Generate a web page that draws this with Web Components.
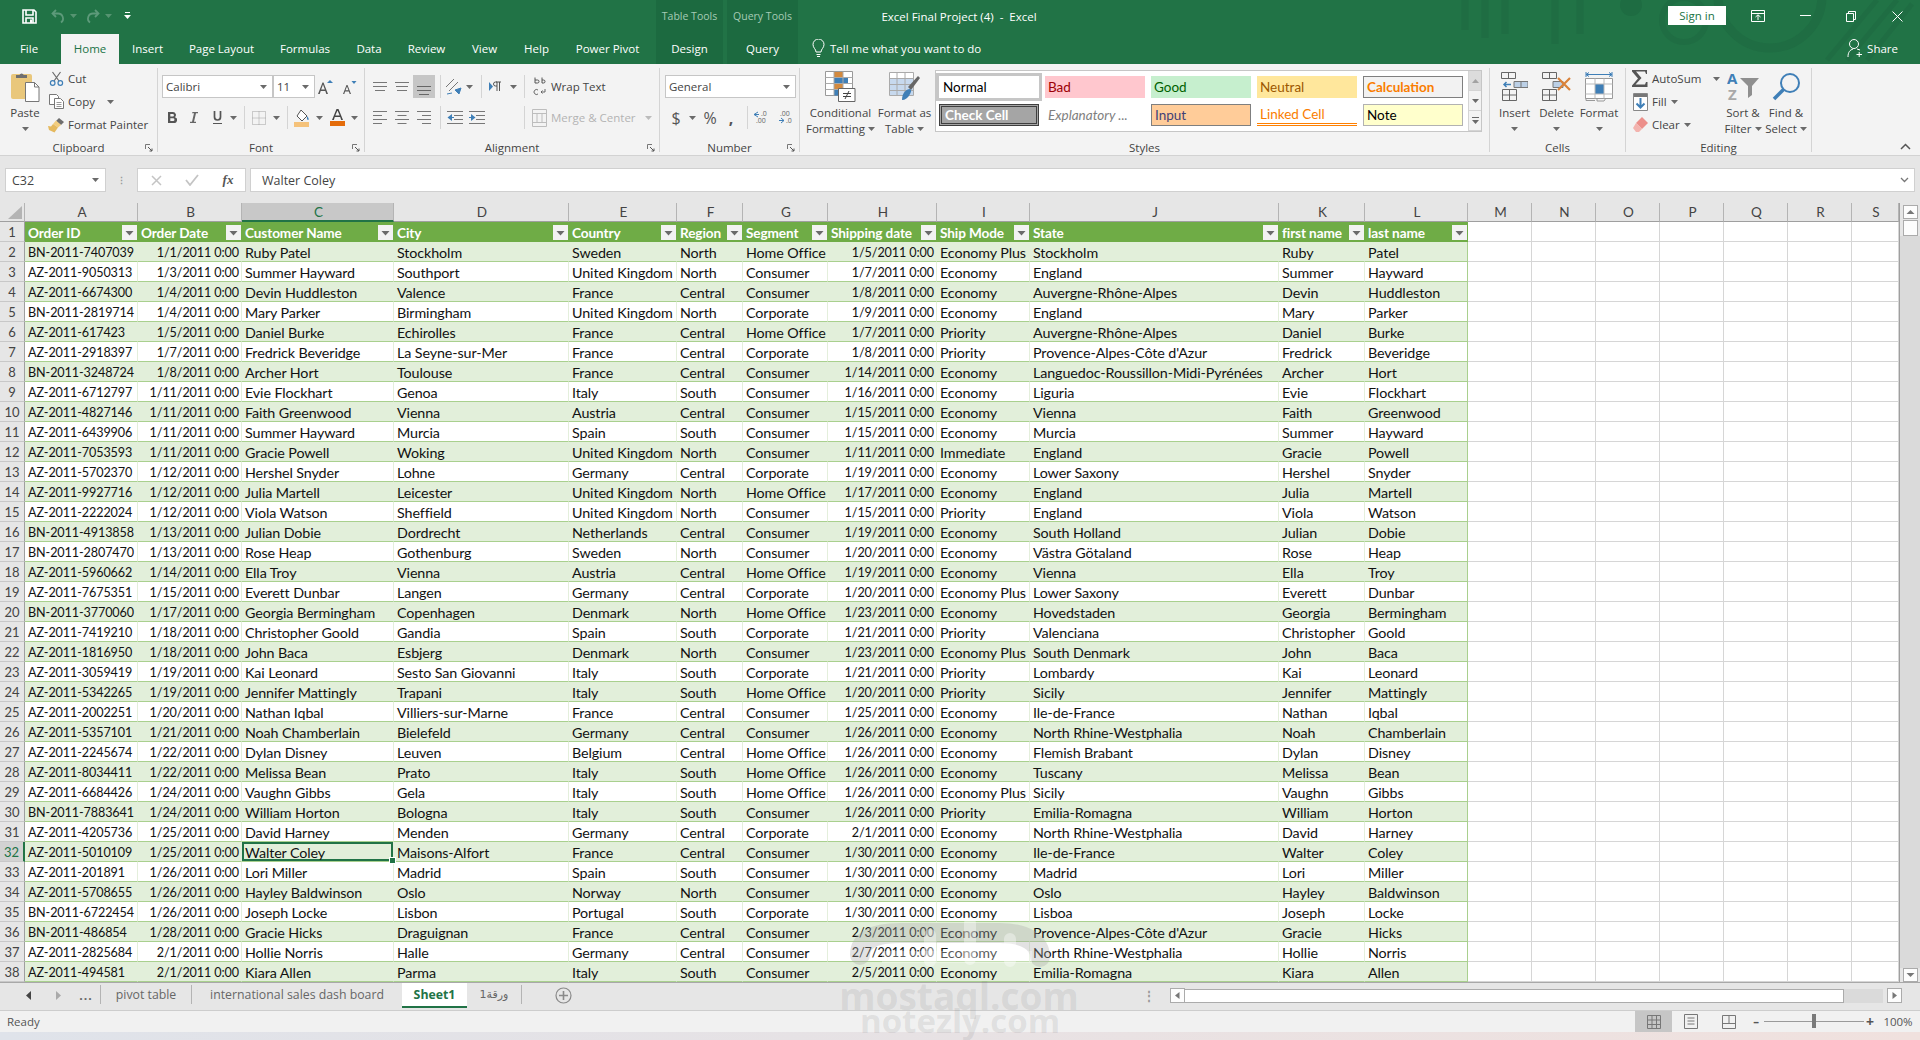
<!DOCTYPE html>
<html>
<head>
<meta charset="utf-8">
<title>Excel Final Project (4) - Excel</title>
<style>
  html, body { margin: 0; padding: 0; background: #e6e6e6; }
  body { font-family: "Open Sans", "Liberation Sans", sans-serif; overflow: hidden; }
</style>
</head>
<body>
<xl-app></xl-app>
<script>
const ICONS = {
  caret: '<svg width="7" height="4"><path d="M0 0h7L3.5 4z" fill="#6a6a6a"/></svg>',
  caretw: '<svg width="7" height="4"><path d="M0 0h7L3.5 4z" fill="#d0e0d6"/></svg>',
  save: '<svg width="15" height="15" fill="none" stroke="#fff" stroke-width="1.6"><path d="M1 1h11l2 2v11H1z"/><path d="M4 1v5h7V1M4 14V9h7v5"/><path d="M8 10.5h2v3.5H8z" fill="#fff" stroke="none"/></svg>',
  undo: '<svg width="14" height="15" fill="none" stroke="#5d9a7a" stroke-width="1.8"><path d="M5 1L1.5 4.5 5 8"/><path d="M2 4.5h5a5 5 0 0 1 3 9"/></svg>',
  redo: '<svg width="14" height="15" fill="none" stroke="#5d9a7a" stroke-width="1.8"><path d="M9 1l3.5 3.5L9 8"/><path d="M12 4.5H7a5 5 0 0 0-3 9"/></svg>',
  qat: '<svg width="7" height="8" fill="#fff"><path d="M1 0h5v1H1zM0 3h7L3.5 7z"/></svg>',
  bulb: '<svg width="13" height="19" fill="none" stroke="#fff"><path d="M4 13c0-3-3-4-3-7.500a5.500 5.500 0 0 1 11 0C12 9 9 10 9 13z"/><path d="M4.500 15.500h4M5 17.500h3"/></svg>',
  share: '<svg width="15" height="20" fill="none" stroke="#fff"><circle cx="7" cy="6" r="4.500"/><path d="M1 19c0-5 2-7 5-8M10 11l3 1M9.500 16.500h5.500M12.200 14v5"/></svg>',
  ribbonopt: '<svg width="14" height="12" fill="none" stroke="#fff"><path d="M.5.500h13v11H.5zM.5 3.500h13"/><path d="M7 10V5M4.500 7L7 4.800 9.500 7"/></svg>',
  min: '<svg width="11" height="2"><path d="M0 .5h11" stroke="#fff"/></svg>',
  restore: '<svg width="10" height="11" fill="none" stroke="#fff"><path d="M.5 2.500h7v8h-7zM2.500 2.500v-2h7v8h-2"/></svg>',
  close: '<svg width="11" height="11" stroke="#fff" fill="none"><path d="M.5.500l10 10M10.500.500l-10 10"/></svg>',
  paste: '<svg width="30" height="31"><rect x="1" y="3" width="21" height="25" rx="2" fill="#e9c77b"/><path d="M6 7V4h3.500a2.200 2.200 0 0 1 4.200 0H17v3z" fill="#6f6f6f"/><path d="M15.500 11.500h9l4.500 4.500v14.500H15.500z" fill="#fff" stroke="#777"/><path d="M24.500 11.500V16H29" fill="none" stroke="#777"/></svg>',
  cut: '<svg width="15" height="15" fill="none"><path d="M3.500 1l6.500 9M11.500 1L5 10" stroke="#6a6a6a" stroke-width="1.200"/><circle cx="3.700" cy="12" r="2.300" stroke="#3f7fb7" stroke-width="1.200"/><circle cx="11.300" cy="12" r="2.300" stroke="#3f7fb7" stroke-width="1.200"/></svg>',
  copy: '<svg width="15" height="15" fill="#fff" stroke="#777"><path d="M.5.500h7l2 2v8h-9z"/><path d="M5.500 4.500h6l3 3v7h-9z"/><path d="M7.500 8.500h5M7.500 10.500h5M7.500 12.500h5" stroke="#999"/></svg>',
  painter: '<svg width="17" height="16"><path d="M11 1l5 4-3 3-5-4z" fill="#6e6e6e"/><path d="M8 3.500l5 4.500-3 2.500-5-3.500z" fill="#f2cd7e"/><path d="M5 7l5 3.500-3.500 5L1 13l-1-4 3 .5z" fill="#e5b95e"/></svg>',
  bold: '<svg width="9" height="11"><path d="M0 0h5a3 3 0 0 1 2 5.200A3 3 0 0 1 5.500 11H0zM2.300 2v2.500h2.400a1.250 1.250 0 0 0 0-2.500zM2.300 6.300V9h2.800a1.350 1.350 0 0 0 0-2.700z" fill="#555" fill-rule="evenodd"/></svg>',
  italic: '<svg width="8" height="11"><path d="M2.500 0H8v1.300H6L4 9.700h2V11H0V9.700h2L4 1.300H2z" fill="#666"/></svg>',
  under: '<svg width="9" height="13" fill="none" stroke="#555"><path d="M1.500 0v6a3 3 0 0 0 6 0V0" stroke-width="1.700"/><path d="M0 12.500h9"/></svg>',
  grow: '<svg width="16" height="16"><path d="M1 15L5.500 3.500h1L11 15H9.300l-1-3H3.700l-1 3zM4.200 10.500h3.600L6 5.500z" fill="#555"/><path d="M10 4l3-3 3 3z" fill="#3f7fb7"/></svg>',
  shrink: '<svg width="15" height="14"><path d="M1 14L4.500 5h1L9 14H7.700l-.8-2.500H3.100L2.300 14zM3.500 10.300h3L5 6.500z" fill="#555"/><path d="M9.500 1h5L12 4z" fill="#3f7fb7"/></svg>',
  border: '<svg width="14" height="14" fill="none" stroke="#a0a0a0" stroke-dasharray="1 1"><path d="M.5.500h13v13H.5zM7 .5v13M.5 7h13"/></svg>',
  fill: '<svg width="17" height="18"><path d="M7 1l6 6-5 5-5-5 2-3z" fill="#fff" stroke="#555"/><path d="M13 7c1.500 2 2 3 1.500 3.800-.8.700-2-.3-1.500-3.800z" fill="#3f7fb7"/><rect y="13" width="15" height="5" fill="#f5c27a"/></svg>',
  color: '<svg width="15" height="17"><path d="M2 11L6.500 0h2L13 11h-1.800l-1-3H4.800l-1 3zM5.300 6.500h4.400L7.500 1.500z" fill="#444"/><rect y="12" width="15" height="5" fill="#e46c0a"/></svg>',
  atop: '<svg width="14" height="9" stroke="#777"><path d="M0 .5h14M0 4.500h14M2 8.500h10"/></svg>',
  amid: '<svg width="14" height="9" stroke="#777"><path d="M0 .5h14M1 4.500h12M2 8.500h10"/></svg>',
  abot: '<svg width="14" height="9" stroke="#666"><path d="M0 .5h14M0 4.500h14M2 8.500h10"/></svg>',
  orient: '<svg width="17" height="17"><path d="M1 9l8-8M4 13l9-9" stroke="#777" fill="none"/><path d="M10 12l6-2-2 6zM2 16l5-1" stroke="#3f7fb7" fill="#3f7fb7"/></svg>',
  rtl: '<svg width="12" height="11"><path d="M0 1l4 4.500L0 10z" fill="#3f7fb7"/><path d="M7 1h5M8 1v9M10.500 1v9M8 5H6.500a2 2 0 0 1 0-4H8" stroke="#555" fill="none"/></svg>',
  wrap: '<svg width="13" height="21" fill="none"><path d="M2 7V1.500M2 4h2.500a1.500 1.500 0 0 1 0 3H2M9 1.500V7M9 4h1.500a1.500 1.500 0 0 1 0 3H9" stroke="#555"/><path d="M5 14a2.500 2.500 0 1 0 0 4M12 13v3H8M9.500 14.500L8 16l1.500 1.500" stroke="#666"/></svg>',
  aleft: '<svg width="14" height="13" stroke="#777"><path d="M0 .5h14M0 4.500h9M0 8.500h14M0 12.500h9"/></svg>',
  acenter: '<svg width="14" height="13" stroke="#777"><path d="M0 .5h14M2.500 4.500h9M0 8.500h14M2.500 12.500h9"/></svg>',
  aright: '<svg width="14" height="13" stroke="#777"><path d="M0 .5h14M5 4.500h9M0 8.500h14M5 12.500h9"/></svg>',
  indl: '<svg width="16" height="13"><path d="M0 .5h16M7 4.500h9M7 8.500h9M0 12.500h16" stroke="#777"/><path d="M5 3v7L.5 6.500z" fill="#3f7fb7"/><path d="M3 6h4v1H3z" fill="#3f7fb7"/></svg>',
  indr: '<svg width="16" height="13"><path d="M0 .5h16M7 4.500h9M7 8.500h9M0 12.500h16" stroke="#777"/><path d="M2 3v7l4.500-3.500z" fill="#3f7fb7"/><path d="M0 6h4v1H0z" fill="#3f7fb7"/></svg>',
  merge: '<svg width="15" height="18" fill="none" stroke="#bdbdbd"><path d="M.5.500h14v17H.5zM.5 4.500h14M.5 13.500h14M5 4.500v9M10 4.500v9"/></svg>',
  inc: '<svg width="17" height="18" overflow="visible"><path d="M5 3L1 5.500 5 8M1 5.500h5" stroke="#3f7fb7" fill="none"/><text x="8" y="7" font-size="7" font-family="Open Sans" fill="#666">.0</text><text x="3" y="14" font-size="7" font-family="Open Sans" fill="#666">.00</text></svg>',
  dec: '<svg width="17" height="18" overflow="visible"><path d="M2 11.500h5M4 9l3 2.500L4 14" stroke="#3f7fb7" fill="none"/><text x="3" y="7" font-size="7" font-family="Open Sans" fill="#666">.00</text><text x="9" y="14" font-size="7" font-family="Open Sans" fill="#666">.0</text></svg>',
  condfmt: '<svg width="31" height="31" fill="none"><path d="M.5.500h27v24H.5z" fill="#fff" stroke="#999"/><rect x="9" y="1" width="9" height="5.500" fill="#d38a3f"/><rect x="9" y="7" width="14" height="6" fill="#3f7fb7"/><rect x="9" y="13" width="9" height="6" fill="#d38a3f"/><rect x="9" y="19" width="5" height="5.500" fill="#3f7fb7"/><path d="M9 .5v24M18 .5v24M.5 6.500h27M.5 12.500h27M.5 18.500h27" stroke="#aaa"/><path d="M13.500 17.500h16.500v13H13.500z" fill="#fff" stroke="#666"/><path d="M18 22.500h8M18 25.500h8M24 20l-4 8" stroke="#444"/></svg>',
  fmttable: '<svg width="31" height="29" fill="none"><path d="M.5.500h24v23H.5z" fill="#fff" stroke="#aaa"/><rect x="1" y="6" width="23" height="17" fill="#c7d9ee"/><path d="M8 .5v23M16 .5v23M.5 6.500h24M.5 12.500h24M.5 18.500h24" stroke="#aaa"/><path d="M19 15L29 4l2 2-9 12z" fill="#666"/><path d="M13 28c0-7 4-11 8-11 2 1 1 3 0 5-2 4-5 6-8 6z" fill="#3f7fb7"/></svg>',
  insert: '<svg width="27" height="29" fill="none"><path d="M.5.500h14v6H.5zM7.500.5v6M1.500 17.500h14v11h-14zM8.500 17.500v11M1.500 23h14" stroke="#666"/><path d="M13 9.500h14v6H13z" fill="#bcd0e6" stroke="#777"/><path d="M20 9.500v6" stroke="#777"/><path d="M10 12.500H3M5.500 10L3 12.500 5.500 15" stroke="#3f7fb7" stroke-width="1.500"/></svg>',
  del: '<svg width="30" height="29" fill="none"><path d="M.5.500h14v6H.5zM7.500.5v6M.5 17.500h14v11H.5zM7.500 17.500v11M.5 23h14" stroke="#666"/><path d="M11 9.500h10v6H11z" fill="#bcd0e6" stroke="#777"/><path d="M16 6l12 12M28 6L16 18" stroke="#d9823a" stroke-width="2.200"/></svg>',
  format: '<svg width="28" height="31" fill="none"><path d="M1 3.500h26M1 1v5M27 1v5" stroke="#3f7fb7"/><path d="M4 1.500L1 3.500 4 5.500M24 1.500l3 2-3 2" stroke="#3f7fb7"/><path d="M.5 7.500h27v20H.5z" fill="#fff" stroke="#999"/><rect x="10" y="13" width="9" height="10" fill="#3f7fb7"/><path d="M10 7.500v20M19 7.500v20M.5 13h27M.5 23h27" stroke="#bbb"/><path d="M1 27v2.500h9M12 27v3h7l2-3" stroke="#999"/></svg>',
  sigma: '<svg width="16" height="17"><path d="M0 0h15v4h-1l-1-2.500H4L9.500 8 3.500 14.500H13l1-2.500h1.500v5H0v-1.500L6 8.500 0 1.500z" fill="#555"/></svg>',
  fillb: '<svg width="15" height="18"><path d="M.5.500h14v17H.5z" fill="#fff" stroke="#888"/><rect x="1" y="1" width="13" height="3" fill="#777"/><path d="M7.500 5v10M3.500 10.500l4 4 4-4" fill="none" stroke="#3f7fb7" stroke-width="2"/></svg>',
  eraser: '<svg width="15" height="15"><path d="M9 0l6 6-6 6L3 6z" fill="#ec8f8a"/><path d="M3 6l6 6-3 3H3L0 11z" fill="#f3b3ae"/></svg>',
  sort: '<svg width="33" height="29"><text x="0" y="12" font-family="Open Sans" font-weight="700" font-size="15" fill="#3f7fb7">A</text><text x="1" y="28" font-family="Open Sans" font-weight="700" font-size="15" fill="#a8a8a8">Z</text><path d="M13 6h19l-7 8v9l-4 3V14z" fill="#8f8f8f"/></svg>',
  find: '<svg width="29" height="29" fill="none"><circle cx="18" cy="11" r="9" stroke="#3f7fb7" stroke-width="2"/><path d="M11.500 17.500L2 27" stroke="#3f7fb7" stroke-width="3.500"/></svg>',
  launch: '<svg width="8" height="8" fill="none" stroke="#777"><path d="M.5 5V.5H5"/><path d="M3 3l4 4M4.500 7H7V4.500" stroke="#555"/></svg>',
  collapse: '<svg width="11" height="7" fill="none" stroke="#555" stroke-width="1.500"><path d="M1 6l4.500-4.500L10 6"/></svg>',
  chev: '<svg width="9" height="6" fill="none" stroke="#777" stroke-width="1.300"><path d="M1 1l3.500 3.500L8 1"/></svg>',
  x: '<svg width="11" height="11" fill="none" stroke="#c4c4c4" stroke-width="1.500"><path d="M1 1l9 9M10 1l-9 9"/></svg>',
  check: '<svg width="14" height="12" fill="none" stroke="#c4c4c4" stroke-width="1.800"><path d="M1 6l4 5 8-10"/></svg>',
  corner: '<svg width="14" height="14"><path d="M14 0v13H0z" fill="#b4b4b4"/></svg>',
  filter: '<svg width="15" height="15"><rect width="15" height="15" fill="#f2f2f2"/><path d="M3.500 6h8l-4 4.500z" fill="#6a6a6a"/></svg>',
  sup: '<svg width="15" height="14"><rect x=".5" y=".5" width="14" height="13" fill="#fdfdfd" stroke="#ababab"/><path d="M3.500 9l4-4 4 4z" fill="#777"/></svg>',
  sdn: '<svg width="15" height="14"><rect x=".5" y=".5" width="14" height="13" fill="#fdfdfd" stroke="#ababab"/><path d="M3.500 5l4 4 4-4z" fill="#777"/></svg>',
  left: '<svg width="6" height="9"><path d="M5 0v9L0 4.500z" fill="#444"/></svg>',
  right: '<svg width="6" height="9"><path d="M1 0v9l5-4.500z" fill="#aaa"/></svg>',
  plus: '<svg width="17" height="17" fill="none" stroke="#8a8a8a"><circle cx="8.500" cy="8.500" r="7.500" stroke-width="1.200"/><path d="M8.500 4v9M4 8.500h9" stroke-width="1.600"/></svg>',
  hl: '<svg width="15" height="15"><rect x=".5" y=".5" width="14" height="14" fill="#fdfdfd" stroke="#ababab"/><path d="M9.500 4v7L5 7.500z" fill="#777"/></svg>',
  hr: '<svg width="15" height="15"><rect x=".5" y=".5" width="14" height="14" fill="#fdfdfd" stroke="#ababab"/><path d="M5.500 4v7l4.500-3.500z" fill="#777"/></svg>',
  vnormal: '<svg width="14" height="14" fill="none" stroke="#777"><path d="M.5.500h13v13H.5zM5 .5v13M9.500.5v13M.5 5h13M.5 9.500h13"/></svg>',
  vlayout: '<svg width="14" height="15" fill="none" stroke="#777"><path d="M.5.500h13v14H.5zM3.500 4h7M3.500 7h7M3.500 10h7"/></svg>',
  vbreak: '<svg width="14" height="14" fill="none" stroke="#777"><path d="M.5.500h13v13H.5zM7 .5v8M.5 8.500H13"/></svg>'
};

class XlIcon extends HTMLElement {
  constructor() {
    super();
    this.attachShadow({ mode: 'open' });
  }
  connectedCallback() {
    this.shadowRoot.innerHTML = `<style>:host{display:inline-flex;flex:none;line-height:0}</style>${ICONS[this.getAttribute('name')] || ''}`;
  }
}

class XlGroup extends HTMLElement {
  constructor() {
    super();
    this.attachShadow({ mode: 'open' });
  }
  connectedCallback() {
    const launch = this.hasAttribute('launch') ? '<xl-icon class="launch" name="launch"></xl-icon>' : '';
    this.shadowRoot.innerHTML = `
      <style>
        :host { display: flex; flex-direction: column; flex: none; box-sizing: border-box; height: 84px; margin-top: 4px; border-right: 1px solid #d4d4d4; position: relative; }
        .body { display: flex; height: 72px; flex: none; }
        .label { height: 16px; line-height: 16px; flex: none; text-align: center; color: #444; font-size: 11.5px; }
        .launch { position: absolute; right: 4px; bottom: 0; }
      </style>
      <div class="body"><slot></slot></div>
      <div class="label">${this.getAttribute('label')}</div>
      ${launch}`;
    this.style.width = this.getAttribute('w') + 'px';
  }
}

class XlStyleCell extends HTMLElement {
  constructor() {
    super();
    this.attachShadow({ mode: 'open' });
    this.shadowRoot.innerHTML = `
      <style>
        :host { display: flex; align-items: center; box-sizing: border-box; height: 22px; padding-left: 3px; font: 13.500px Lato, sans-serif; white-space: nowrap; overflow: hidden; }
        :host([kind=normal]) { background: #fff; outline: 3px solid #c6c6c6; outline-offset: 0; color: #000; padding-left: 4px; }
        :host([kind=bad]) { background: #ffc7ce; color: #9c0006; }
        :host([kind=good]) { background: #c6efce; color: #006100; }
        :host([kind=neutral]) { background: #ffe79c; color: #9c5700; }
        :host([kind=calc]) { background: #f2f2f2; border: 1px solid #7f7f7f; color: #fa7d00; font-weight: 700; }
        :host([kind=check]) { background: #a5a5a5; border: 3px double #3f3f3f; color: #fff; font-weight: 700; }
        :host([kind=expl]) { color: #7f7f7f; font-style: italic; }
        :host([kind=input]) { background: #ffcc99; border: 1px solid #7f7f7f; color: #3f3f76; }
        :host([kind=linked]) { color: #fa7d00; border-bottom: 3px double #ff8001; }
        :host([kind=note]) { background: #ffffcc; border: 1px solid #b2b2b2; color: #000; }
      </style><slot></slot>`;
  }
}

class XlCombo extends HTMLElement {
  constructor() {
    super();
    this.attachShadow({ mode: 'open' });
    this.shadowRoot.innerHTML = `
      <style>
        :host { display: flex; align-items: center; justify-content: space-between; flex: none; box-sizing: border-box; height: 23px; background: #fff; border: 1px solid #c6c6c6; padding: 0 5px 0 3px; color: #444; font-size: 11.500px; }
      </style><slot></slot><xl-icon name="caret"></xl-icon>`;
  }
}

class XlTitlebar extends HTMLElement {
  constructor() {
    super();
    this.attachShadow({ mode: 'open' });
    this.shadowRoot.innerHTML = `
      <style>
        :host { display: flex; height: 34px; color: #fff; font-size: 11.500px; position: relative; }
        .c { display: flex; align-items: center; justify-content: center; flex: none; padding-bottom: 2px; box-sizing: border-box; position: relative; z-index: 1; }
        .ctx { background: #1c6a40; color: #a5cbb5; font-size: 10.500px; height: 34px; }
        .art { position: absolute; left: 1430px; top: 0; }
        .signin { width: 58px; height: 19px; margin-top: 6px; background: #fff; color: #217346; display: flex; align-items: center; justify-content: center; position: relative; z-index: 1; }
      </style>
      <svg class="art" width="490" height="64" fill="none">
        <g stroke="#1f6d43" stroke-width="7"><path d="M35 0v30M55 0v38M75 0v34M125 0v44M150 0v34"/></g>
        <circle cx="201" cy="5" r="11" fill="#1e6c42"/>
        <circle cx="254" cy="20" r="22" stroke="#1f6d43" stroke-width="6"/>
        <circle cx="340" cy="-4" r="52" stroke="#1f6d43" stroke-width="9"/>
        <g stroke="#1f6d43" stroke-width="5"><path d="M397 60l50-60M417 60l50-60M437 60l45-56"/></g>
      </svg>
      <div class="c" style="width:18px"></div>
      <div class="c" style="width:22px"><xl-icon name="save"></xl-icon></div>
      <div class="c" style="width:11px"></div>
      <div class="c" style="width:14px"><xl-icon name="undo"></xl-icon></div>
      <div class="c" style="width:16px"><xl-icon name="caretw" style="opacity:.3"></xl-icon></div>
      <div class="c" style="width:4px"></div>
      <div class="c" style="width:15px"><xl-icon name="redo"></xl-icon></div>
      <div class="c" style="width:16px"><xl-icon name="caretw" style="opacity:.3"></xl-icon></div>
      <div class="c" style="width:2px"></div>
      <div class="c" style="width:18px"><xl-icon name="qat"></xl-icon></div>
      <div class="c" style="width:520px"></div>
      <div class="c ctx" style="width:67px">Table Tools</div>
      <div class="c" style="width:4px"></div>
      <div class="c ctx" style="width:71px">Query Tools</div>
      <div class="c" style="width:84px"></div>
      <div class="c" style="width:154px;white-space:pre">Excel Final Project (4)  -  Excel</div>
      <div style="flex:1"></div>
      <div class="signin">Sign in</div>
      <div class="c" style="width:64px"><xl-icon name="ribbonopt"></xl-icon></div>
      <div class="c" style="width:30px"><xl-icon name="min"></xl-icon></div>
      <div class="c" style="width:62px"><xl-icon name="restore"></xl-icon></div>
      <div class="c" style="width:30px"><xl-icon name="close"></xl-icon></div>
      <div style="width:8px"></div>`;
  }
}

class XlTabstrip extends HTMLElement {
  constructor() {
    super();
    this.attachShadow({ mode: 'open' });
    const tabs = [['File', 58], ['Home', 58, 'on'], ['Insert', 57], ['Page Layout', 91], ['Formulas', 76], ['Data', 52], ['Review', 63], ['View', 53], ['Help', 51], ['Power Pivot', 91]];
    this.shadowRoot.innerHTML = `
      <style>
        :host { display: flex; height: 30px; color: #fff; font-size: 11.500px; position: relative; z-index: 1; }
        .t { display: flex; align-items: center; justify-content: center; flex: none; box-sizing: border-box; padding-bottom: 2px; }
        .on { background: #f3f3f3; color: #217346; margin-left: 3px; }
        .ctx { background: #1c6a40; }
        .tell { display: flex; align-items: center; gap: 5px; margin-left: 14px; padding-bottom: 2px; }
        .share { display: flex; align-items: center; gap: 5px; margin-left: auto; margin-right: 22px; padding-bottom: 2px; }
      </style>
      ${tabs.map(t => `<div class="t ${t[2] || ''}" style="width:${t[1]}px">${t[0]}</div>`).join('')}
      <div class="t ctx" style="width:67px;margin-left:3px">Design</div>
      <div class="t ctx" style="width:71px;margin-left:4px">Query</div>
      <div class="tell"><xl-icon name="bulb"></xl-icon><span>Tell me what you want to do</span></div>
      <div class="share"><xl-icon name="share"></xl-icon><span>Share</span></div>`;
  }
}

class XlRibbon extends HTMLElement {
  constructor() {
    super();
    this.attachShadow({ mode: 'open' });
    this.shadowRoot.innerHTML = `
      <style>
        :host { display: flex; height: 92px; background: #f3f3f3; border-bottom: 1px solid #d2d2d2; box-sizing: border-box; color: #444; font-size: 11.500px; white-space: nowrap; }
        .c { display: flex; align-items: center; justify-content: center; flex: none; height: 100%; }
        .row { display: flex; align-items: center; height: 23px; }
        .col { display: flex; flex-direction: column; flex: none; }
        .sep { width: 1px; height: 23px; background: #d4d4d4; flex: none; }
        .sm { display: flex; align-items: center; height: 23px; gap: 4px; }
        .sm .ic { width: 16px; display: flex; justify-content: center; flex: none; }
        .big { display: flex; flex-direction: column; align-items: center; flex: none; }
        .big .ic { height: 37px; display: flex; align-items: center; justify-content: center; }
        .big .ln { height: 16px; line-height: 16px; display: flex; align-items: center; gap: 3px; }
        .on { background: #c6c6c6; }
        .gallery { display: flex; box-sizing: border-box; width: 547px; height: 62px; margin: 2px 0 0 2px; background: #fff; border: 1px solid #c6c6c6; padding: 5px 0 0 3px; }
        .gal { display: grid; grid-template-columns: repeat(5, 100px); grid-auto-rows: 22px; gap: 6px; }
        .gal-sb { display: flex; flex-direction: column; margin: -5px 0 0 5px; width: 13px; border-left: 1px solid #d4d4d4; }
        .gal-sb div { flex: 1; display: flex; align-items: center; justify-content: center; background: #f3f3f3; border-bottom: 1px solid #d4d4d4; }
        .gal-sb div:first-child { background: #dcdcdc; }
        .sym { font-size: 16px; color: #555; line-height: 1; }
        .faded { color: #b3b3b3; }
        .end { flex: 1; display: flex; justify-content: flex-end; align-items: flex-end; padding: 0 9px 5px 0; }
      </style>

      <xl-group label="Clipboard" w="158" launch>
        <div class="big" style="width:50px;margin-right:-2px">
          <div class="ic" style="height:37px"><xl-icon name="paste"></xl-icon></div>
          <div class="ln">Paste</div>
          <div class="ln"><xl-icon name="caret"></xl-icon></div>
        </div>
        <div class="col" style="margin-top:-1px">
          <div class="sm"><span class="ic"><xl-icon name="cut"></xl-icon></span>Cut</div>
          <div class="sm"><span class="ic"><xl-icon name="copy"></xl-icon></span>Copy<xl-icon name="caret" style="margin-left:8px"></xl-icon></div>
          <div class="sm"><span class="ic"><xl-icon name="painter"></xl-icon></span>Format Painter</div>
        </div>
      </xl-group>

      <xl-group label="Font" w="207" launch>
        <div class="col" style="padding:7px 0 0 4px">
          <div class="row">
            <xl-combo style="width:111px;font-size:11.500px">Calibri</xl-combo>
            <xl-combo style="width:42px">11</xl-combo>
            <div class="c" style="width:20px"><xl-icon name="grow"></xl-icon></div>
            <div class="c" style="width:28px"><xl-icon name="shrink"></xl-icon></div>
          </div>
          <div class="row" style="margin-top:8px">
            <div class="c" style="width:20px"><xl-icon name="bold"></xl-icon></div>
            <div class="c" style="width:24px"><xl-icon name="italic"></xl-icon></div>
            <div class="c" style="width:22px"><xl-icon name="under"></xl-icon></div>
            <div class="c" style="width:10px"><xl-icon name="caret"></xl-icon></div>
            <div style="width:6px"></div><div class="sep"></div>
            <div class="c" style="width:28px"><xl-icon name="border"></xl-icon></div>
            <div class="c" style="width:6px"><xl-icon name="caret"></xl-icon></div>
            <div style="width:8px"></div><div class="sep"></div>
            <div class="c" style="width:28px"><xl-icon name="fill"></xl-icon></div>
            <div class="c" style="width:6px"><xl-icon name="caret"></xl-icon></div>
            <div class="c" style="width:30px"><xl-icon name="color"></xl-icon></div>
            <div class="c" style="width:4px"><xl-icon name="caret"></xl-icon></div>
          </div>
        </div>
      </xl-group>

      <xl-group label="Alignment" w="295" launch>
        <div class="col" style="padding:7px 0 0 4px">
          <div class="row">
            <div class="c" style="width:22px"><xl-icon name="atop"></xl-icon></div>
            <div class="c" style="width:22px"><xl-icon name="amid"></xl-icon></div>
            <div class="c on" style="width:22px;align-items:flex-end;padding-bottom:3px;box-sizing:border-box"><xl-icon name="abot"></xl-icon></div>
            <div style="width:5px"></div><div class="sep"></div>
            <div class="c" style="width:24px"><xl-icon name="orient"></xl-icon></div>
            <div class="c" style="width:8px"><xl-icon name="caret"></xl-icon></div>
            <div style="width:8px"></div><div class="sep"></div>
            <div class="c" style="width:26px"><xl-icon name="rtl"></xl-icon></div>
            <div class="c" style="width:10px"><xl-icon name="caret"></xl-icon></div>
            <div style="width:6px"></div><div class="sep"></div>
            <div class="c" style="width:8px"></div><xl-icon name="wrap"></xl-icon><span style="margin-left:5px">Wrap Text</span>
          </div>
          <div class="row" style="margin-top:8px">
            <div class="c" style="width:22px"><xl-icon name="aleft"></xl-icon></div>
            <div class="c" style="width:22px"><xl-icon name="acenter"></xl-icon></div>
            <div class="c" style="width:22px"><xl-icon name="aright"></xl-icon></div>
            <div style="width:5px"></div><div class="sep"></div>
            <div style="width:3px"></div>
            <div class="c" style="width:22px"><xl-icon name="indl"></xl-icon></div>
            <div class="c" style="width:22px"><xl-icon name="indr"></xl-icon></div>
            <div style="width:36px"></div><div class="sep"></div>
            <div class="c" style="width:7px"></div><xl-icon name="merge"></xl-icon>
            <span class="faded" style="margin-left:4px">Merge &amp; Center</span>
            <xl-icon name="caret" style="margin-left:9px;opacity:.4"></xl-icon>
          </div>
        </div>
      </xl-group>

      <xl-group label="Number" w="140" launch>
        <div class="col" style="padding:7px 0 0 5px">
          <div class="row"><xl-combo style="width:131px">General</xl-combo></div>
          <div class="row" style="margin-top:8px">
            <div class="c sym" style="width:22px">$</div>
            <div class="c" style="width:10px"><xl-icon name="caret"></xl-icon></div>
            <div class="c sym" style="width:26px">%</div>
            <div class="c sym" style="width:16px;font-weight:700">,</div>
            <div style="width:8px"></div><div class="sep"></div>
            <div class="c" style="width:26px"><xl-icon name="inc"></xl-icon></div>
            <div class="c" style="width:22px"><xl-icon name="dec"></xl-icon></div>
          </div>
        </div>
      </xl-group>

      <xl-group label="Styles" w="690">
        <div class="big" style="width:71px;margin-left:5px">
          <div class="ic"><xl-icon name="condfmt"></xl-icon></div>
          <div class="ln">Conditional</div>
          <div class="ln">Formatting<xl-icon name="caret"></xl-icon></div>
        </div>
        <div class="big" style="width:57px">
          <div class="ic"><xl-icon name="fmttable"></xl-icon></div>
          <div class="ln">Format as</div>
          <div class="ln">Table<xl-icon name="caret"></xl-icon></div>
        </div>
        <div class="gallery">
          <div class="gal">
            <xl-style-cell kind="normal">Normal</xl-style-cell>
            <xl-style-cell kind="bad">Bad</xl-style-cell>
            <xl-style-cell kind="good">Good</xl-style-cell>
            <xl-style-cell kind="neutral">Neutral</xl-style-cell>
            <xl-style-cell kind="calc">Calculation</xl-style-cell>
            <xl-style-cell kind="check">Check Cell</xl-style-cell>
            <xl-style-cell kind="expl">Explanatory ...</xl-style-cell>
            <xl-style-cell kind="input">Input</xl-style-cell>
            <xl-style-cell kind="linked">Linked Cell</xl-style-cell>
            <xl-style-cell kind="note">Note</xl-style-cell>
          </div>
          <div class="gal-sb">
            <div><xl-icon name="caret" style="transform:rotate(180deg);opacity:.5"></xl-icon></div>
            <div><xl-icon name="caret"></xl-icon></div>
            <div style="flex-direction:column;gap:2px"><span style="width:7px;height:1px;background:#666"></span><xl-icon name="caret"></xl-icon></div>
          </div>
        </div>
      </xl-group>

      <xl-group label="Cells" w="136">
        <div class="big" style="width:43px;margin-left:3px">
          <div class="ic"><xl-icon name="insert"></xl-icon></div><div class="ln">Insert</div><div class="ln"><xl-icon name="caret"></xl-icon></div>
        </div>
        <div class="big" style="width:41px">
          <div class="ic"><xl-icon name="del"></xl-icon></div><div class="ln">Delete</div><div class="ln"><xl-icon name="caret"></xl-icon></div>
        </div>
        <div class="big" style="width:44px">
          <div class="ic"><xl-icon name="format"></xl-icon></div><div class="ln">Format</div><div class="ln"><xl-icon name="caret"></xl-icon></div>
        </div>
      </xl-group>

      <xl-group label="Editing" w="186">
        <div class="col" style="width:91px;margin:-1px 0 0 6px">
          <div class="sm"><span class="ic"><xl-icon name="sigma"></xl-icon></span>AutoSum<xl-icon name="caret" style="margin-left:8px"></xl-icon></div>
          <div class="sm"><span class="ic"><xl-icon name="fillb"></xl-icon></span>Fill<xl-icon name="caret"></xl-icon></div>
          <div class="sm"><span class="ic"><xl-icon name="eraser"></xl-icon></span>Clear<xl-icon name="caret"></xl-icon></div>
        </div>
        <div class="big" style="width:40px">
          <div class="ic"><xl-icon name="sort"></xl-icon></div><div class="ln">Sort &amp;</div><div class="ln">Filter<xl-icon name="caret"></xl-icon></div>
        </div>
        <div class="big" style="width:46px">
          <div class="ic"><xl-icon name="find"></xl-icon></div><div class="ln">Find &amp;</div><div class="ln">Select<xl-icon name="caret"></xl-icon></div>
        </div>
      </xl-group>

      <div class="end"><xl-icon name="collapse"></xl-icon></div>`;
  }
}

class XlFormulaBar extends HTMLElement {
  constructor() {
    super();
    this.attachShadow({ mode: 'open' });
    this.shadowRoot.innerHTML = `
      <style>
        :host { display: flex; align-items: center; height: 47px; box-sizing: border-box; padding: 12px 5px 11px 5px; background: #e6e6e6; color: #444; font-size: 12px; }
        .box { height: 24px; box-sizing: border-box; background: #fff; border: 1px solid #d0d0d0; display: flex; align-items: center; flex: none; }
        .name { width: 101px; justify-content: space-between; padding: 0 6px 0 6px; font-size: 12.500px; }
        .dots { width: 31px; text-align: center; color: #999; font-weight: 700; line-height: 5px; font-size: 9px; letter-spacing: 0; flex: none; }
        .fx { width: 109px; font: italic 700 13px "Liberation Serif", serif; color: #555; }
        .fx span { width: 36px; display: flex; justify-content: center; flex: none; }
        .input { flex: 1; margin-left: 4px; padding: 0 5px 0 11px; justify-content: space-between; font-size: 12.500px; }
      </style>
      <div class="box name">C32<xl-icon name="caret"></xl-icon></div>
      <div class="dots">&#8942;</div>
      <div class="box fx"><span><xl-icon name="x"></xl-icon></span><span><xl-icon name="check"></xl-icon></span><span>fx</span></div>
      <div class="box input">Walter Coley<xl-icon name="chev"></xl-icon></div>`;
  }
}

const COLS = [113, 104, 152, 175, 108, 66, 85, 109, 93, 249, 86, 103, 64, 64, 64, 64, 64, 64, 47];
const LETTERS = 'ABCDEFGHIJKLMNOPQRS'.split('');
const HEADERS = ['Order ID', 'Order Date', 'Customer Name', 'City', 'Country', 'Region', 'Segment', 'Shipping date', 'Ship Mode', 'State', 'first name', 'last name'];
const RAW = `BN-2011-7407039|1/1/2011|Ruby Patel|Stockholm|Sweden|North|Home Office|1/5/2011|Economy Plus|Stockholm
AZ-2011-9050313|1/3/2011|Summer Hayward|Southport|United Kingdom|North|Consumer|1/7/2011|Economy|England
AZ-2011-6674300|1/4/2011|Devin Huddleston|Valence|France|Central|Consumer|1/8/2011|Economy|Auvergne-Rhône-Alpes
BN-2011-2819714|1/4/2011|Mary Parker|Birmingham|United Kingdom|North|Corporate|1/9/2011|Economy|England
AZ-2011-617423|1/5/2011|Daniel Burke|Echirolles|France|Central|Home Office|1/7/2011|Priority|Auvergne-Rhône-Alpes
AZ-2011-2918397|1/7/2011|Fredrick Beveridge|La Seyne-sur-Mer|France|Central|Corporate|1/8/2011|Priority|Provence-Alpes-Côte d'Azur
BN-2011-3248724|1/8/2011|Archer Hort|Toulouse|France|Central|Consumer|1/14/2011|Economy|Languedoc-Roussillon-Midi-Pyrénées
AZ-2011-6712797|1/11/2011|Evie Flockhart|Genoa|Italy|South|Consumer|1/16/2011|Economy|Liguria
AZ-2011-4827146|1/11/2011|Faith Greenwood|Vienna|Austria|Central|Consumer|1/15/2011|Economy|Vienna
AZ-2011-6439906|1/11/2011|Summer Hayward|Murcia|Spain|South|Consumer|1/15/2011|Economy|Murcia
AZ-2011-7053593|1/11/2011|Gracie Powell|Woking|United Kingdom|North|Consumer|1/11/2011|Immediate|England
AZ-2011-5702370|1/12/2011|Hershel Snyder|Lohne|Germany|Central|Corporate|1/19/2011|Economy|Lower Saxony
AZ-2011-9927716|1/12/2011|Julia Martell|Leicester|United Kingdom|North|Home Office|1/17/2011|Economy|England
AZ-2011-2222024|1/12/2011|Viola Watson|Sheffield|United Kingdom|North|Consumer|1/15/2011|Priority|England
BN-2011-4913858|1/13/2011|Julian Dobie|Dordrecht|Netherlands|Central|Consumer|1/19/2011|Economy|South Holland
BN-2011-2807470|1/13/2011|Rose Heap|Gothenburg|Sweden|North|Consumer|1/20/2011|Economy|Västra Götaland
AZ-2011-5960662|1/14/2011|Ella Troy|Vienna|Austria|Central|Home Office|1/19/2011|Economy|Vienna
AZ-2011-7675351|1/15/2011|Everett Dunbar|Langen|Germany|Central|Corporate|1/20/2011|Economy Plus|Lower Saxony
BN-2011-3770060|1/17/2011|Georgia Bermingham|Copenhagen|Denmark|North|Home Office|1/23/2011|Economy|Hovedstaden
AZ-2011-7419210|1/18/2011|Christopher Goold|Gandia|Spain|South|Corporate|1/21/2011|Priority|Valenciana
AZ-2011-1816950|1/18/2011|John Baca|Esbjerg|Denmark|North|Consumer|1/23/2011|Economy Plus|South Denmark
AZ-2011-3059419|1/19/2011|Kai Leonard|Sesto San Giovanni|Italy|South|Corporate|1/21/2011|Priority|Lombardy
AZ-2011-5342265|1/19/2011|Jennifer Mattingly|Trapani|Italy|South|Home Office|1/20/2011|Priority|Sicily
AZ-2011-2002251|1/20/2011|Nathan Iqbal|Villiers-sur-Marne|France|Central|Consumer|1/25/2011|Economy|Ile-de-France
AZ-2011-5357101|1/21/2011|Noah Chamberlain|Bielefeld|Germany|Central|Consumer|1/26/2011|Economy|North Rhine-Westphalia
AZ-2011-2245674|1/22/2011|Dylan Disney|Leuven|Belgium|Central|Home Office|1/26/2011|Economy|Flemish Brabant
AZ-2011-8034411|1/22/2011|Melissa Bean|Prato|Italy|South|Home Office|1/26/2011|Economy|Tuscany
AZ-2011-6684426|1/24/2011|Vaughn Gibbs|Gela|Italy|South|Home Office|1/26/2011|Economy Plus|Sicily
BN-2011-7883641|1/24/2011|William Horton|Bologna|Italy|South|Consumer|1/26/2011|Priority|Emilia-Romagna
AZ-2011-4205736|1/25/2011|David Harney|Menden|Germany|Central|Corporate|2/1/2011|Economy|North Rhine-Westphalia
AZ-2011-5010109|1/25/2011|Walter Coley|Maisons-Alfort|France|Central|Consumer|1/30/2011|Economy|Ile-de-France
AZ-2011-201891|1/26/2011|Lori Miller|Madrid|Spain|South|Consumer|1/30/2011|Economy|Madrid
AZ-2011-5708655|1/26/2011|Hayley Baldwinson|Oslo|Norway|North|Consumer|1/30/2011|Economy|Oslo
BN-2011-6722454|1/26/2011|Joseph Locke|Lisbon|Portugal|South|Corporate|1/30/2011|Economy|Lisboa
BN-2011-486854|1/28/2011|Gracie Hicks|Draguignan|France|Central|Consumer|2/3/2011|Economy|Provence-Alpes-Côte d'Azur
AZ-2011-2825684|2/1/2011|Hollie Norris|Halle|Germany|Central|Consumer|2/7/2011|Economy|North Rhine-Westphalia
AZ-2011-494581|2/1/2011|Kiara Allen|Parma|Italy|South|Consumer|2/5/2011|Economy|Emilia-Romagna`;

class XlSheet extends HTMLElement {
  constructor() {
    super();
    this.attachShadow({ mode: 'open' });
    let html = '<div class="ch corner"><xl-icon name="corner"></xl-icon></div>';
    LETTERS.forEach(l => { html += `<div class="ch ${l === 'C' ? 'sel' : ''}">${l}</div>`; });
    html += '<div class="rh">1</div>';
    HEADERS.forEach(h => { html += `<div class="c head"><span>${h}</span><xl-icon name="filter"></xl-icon></div>`; });
    for (let i = 12; i < 19; i++) html += '<div class="c blank"></div>';
    RAW.split('\n').forEach((line, idx) => {
      const r = idx + 2;
      const f = line.split('|');
      const first = f[2].split(' ')[0];
      const last = f[2].split(' ').slice(1).join(' ');
      const vals = [f[0], f[1] + ' 0:00', f[2], f[3], f[4], f[5], f[6], f[7] + ' 0:00', f[8], f[9], first, last];
      const band = r % 2 === 0 ? 'band' : '';
      html += `<div class="rh ${r === 32 ? 'rsel' : ''}">${r}</div>`;
      vals.forEach((v, i) => {
        const cls = ['c', 'd', band];
        if (i === 0) cls.push('dg');
        if (i === 1 || i === 7) cls.push('num', 'dg');
        if (i === 11) cls.push('lastc');
        if (r === 32 && i === 2) cls.push('active');
        html += `<div class="${cls.join(' ')}">${v}</div>`;
      });
      for (let i = 12; i < 19; i++) html += '<div class="c blank"></div>';
    });
    this.shadowRoot.innerHTML = `
      <style>
        :host { display: flex; height: 779px; background: #e6e6e6; font: 14.300px Lato, "Liberation Sans", sans-serif; color: #111; }
        .grid { display: grid; grid-template-columns: 25px ${COLS.map(c => c + 'px').join(' ')}; grid-template-rows: 19px repeat(38, 20px); width: 1899px; flex: none; }
        .ch { display: flex; align-items: center; justify-content: center; background: #e6e6e6; color: #444; border-right: 1px solid #b4b4b4; border-bottom: 1px solid #9f9f9f; box-sizing: border-box; font-size: 13.500px; padding-left: 2px; }
        .corner { align-items: flex-end; justify-content: flex-end; padding: 0 2px 1px 0; border-right: 1px solid #b4b4b4; }
        .sel { background: #c8c8c8; border-bottom: 2px solid #217346; color: #217346; }
        .rh { display: flex; align-items: center; justify-content: center; background: #e6e6e6; color: #444; border-right: 1px solid #9f9f9f; border-bottom: 1px solid #c8c8c8; box-sizing: border-box; font-size: 13px; padding-top: 1px; }
        .rsel { background: #d2d2d2; color: #217346; border-right: 2px solid #217346; }
        .c { box-sizing: border-box; display: flex; align-items: center; padding: 1px 2px 0 3px; white-space: nowrap; overflow: hidden; background: #fff; letter-spacing: -.1px; }
        .dg { font-size: 12.600px; }
        .blank { border-right: 1px solid #d6d6d6; border-bottom: 1px solid #d6d6d6; }
        .d { border-bottom: 1px solid #a9d08e; border-right: 1px solid #e4efdc; }
        .band { background: #e2efda; border-right-color: #e2efda; }
        .lastc { border-right: 1px solid #a9d08e; }
        .num { justify-content: flex-end; }
        .head { background: #6fac46; color: #fff; font-weight: 700; font-size: 13.600px; justify-content: space-between; padding: 0 1px 0 3px; }
        .head span { padding-top: 1px; }
        .active { position: relative; overflow: visible; box-shadow: inset 0 0 0 2px #217346; z-index: 2; }
        .active::after { content: ""; position: absolute; right: -3px; bottom: -3px; width: 5px; height: 5px; background: #217346; border: 1px solid #fff; }
        .bar { flex: 1; display: flex; flex-direction: column; padding: 2px 3px 0 3px; border-left: 1px solid #9f9f9f; box-sizing: border-box; }
        .thumb { height: 16px; margin-top: 1px; background: #fdfdfd; border: 1px solid #ababab; box-sizing: border-box; flex: none; }
        .track { flex: 1; margin: 0 -3px; background: #dadada; }
      </style>
      <div class="grid">${html}</div>
      <div class="bar"><xl-icon name="sup"></xl-icon><div class="thumb"></div><div class="track"></div><xl-icon name="sdn"></xl-icon></div>`;
  }
}

class XlSheetTabs extends HTMLElement {
  constructor() {
    super();
    this.attachShadow({ mode: 'open' });
    this.shadowRoot.innerHTML = `
      <style>
        :host { display: flex; align-items: flex-start; height: 28px; background: #e6e6e6; border-top: 1px solid #a8a8a8; box-sizing: border-box; color: #666; font-size: 12.300px; }
        .c { display: flex; align-items: center; justify-content: center; flex: none; height: 25px; }
        .t { border-right: 1px solid #b4b4b4; box-sizing: border-box; height: 19px; margin-top: 2px; }
        .on { background: #fff; color: #217346; font-weight: 700; border-bottom: 2px solid #217346; height: 25px; box-sizing: border-box; }
        .rtl { font-family: "DejaVu Sans", "Noto Sans", sans-serif; font-size: 11px; }
        .track { width: 659px; height: 14px; margin: 6px 0 0 0; background: #fff; border: 1px solid #ababab; border-width: 1px 1px 1px 0; box-sizing: border-box; flex: none; }
        .rest { width: 39px; height: 14px; margin-top: 6px; background: #dadada; flex: none; }
      </style>
      <div class="c" style="width:14px"></div>
      <div class="c" style="width:30px"><xl-icon name="left"></xl-icon></div>
      <div class="c" style="width:28px"><xl-icon name="right"></xl-icon></div>
      <div class="c" style="width:28px;font-weight:700;letter-spacing:1px">...</div>
      <div class="c t" style="width:1px;border-right:1px solid #b4b4b4"></div>
      <div class="c t" style="width:91px">pivot table</div>
      <div class="c t" style="width:210px;border:0">international sales dash board</div>
      <div class="c on" style="width:65px">Sheet1</div>
      <div class="c t" style="width:55px"><span class="rtl" dir="rtl">ورقة1</span></div>
      <div class="c" style="width:83px"><xl-icon name="plus"></xl-icon></div>
      <div class="c" style="width:565px;justify-content:flex-end;padding-right:15px;box-sizing:border-box;color:#999;font-weight:700">&#8942;</div>
      <xl-icon name="hl" style="margin-top:5px"></xl-icon>
      <div class="track"></div><div class="rest"></div>
      <div style="width:4px"></div>
      <xl-icon name="hr" style="margin-top:5px"></xl-icon>`;
  }
}

class XlStatusBar extends HTMLElement {
  constructor() {
    super();
    this.attachShadow({ mode: 'open' });
    this.shadowRoot.innerHTML = `
      <style>
        :host { display: flex; align-items: center; height: 22px; background: #f1f1f1; border-top: 1px solid #cdcdcd; box-sizing: border-box; color: #555; font-size: 11.500px; padding-left: 7px; }
        .v { display: flex; align-items: center; justify-content: center; flex: none; height: 21px; }
        .on { background: #c6c6c6; }
        .line { position: relative; width: 100px; height: 1px; background: #9a9a9a; flex: none; }
        .line::after { content: ""; position: absolute; left: 48px; top: -7px; width: 4px; height: 14px; background: #7a7a7a; }
      </style>
      <span>Ready</span>
      <div style="flex:1"></div>
      <div class="v on" style="width:37px"><xl-icon name="vnormal"></xl-icon></div>
      <div class="v" style="width:38px"><xl-icon name="vlayout"></xl-icon></div>
      <div class="v" style="width:38px"><xl-icon name="vbreak"></xl-icon></div>
      <div class="v" style="width:16px;font-weight:700">&#8211;</div>
      <div class="line"></div>
      <div class="v" style="width:12px;font-weight:700;font-size:14px">+</div>
      <div class="v" style="width:44px">100%</div>`;
  }
}

class XlWatermark extends HTMLElement {
  constructor() {
    super();
    this.attachShadow({ mode: 'open' });
    this.shadowRoot.innerHTML = `
      <style>
        :host { position: absolute; left: 820px; top: 915px; width: 280px; height: 125px; pointer-events: none; display: block; font: 700 37px/26px "Open Sans", sans-serif; color: rgba(110,110,110,.14); text-align: center; z-index: 3; }
        svg { display: block; }
        div { white-space: nowrap; }
      </style>
      <svg width="280" height="62" fill="none">
        <path d="M40 40c0-14 12-22 40-22h100c26 0 40 10 40 24" stroke="rgba(170,170,170,.34)" stroke-width="20" stroke-linecap="round"/>
        <path d="M62 42h150" stroke="rgba(255,255,255,.3)" stroke-width="12"/>
        <path d="M110 20v26M150 8v36M190 24v22" stroke="rgba(255,255,255,.38)" stroke-width="12" stroke-linecap="round"/>
      </svg>
      <div style="margin:6px 0 0 -2px">mostaql.com</div>
      <div style="margin:-1px 0 0 0;font-size:33px">notezly.com</div>`;
  }
}

class XlApp extends HTMLElement {
  constructor() {
    super();
    this.attachShadow({ mode: 'open' });
    this.shadowRoot.innerHTML = `
      <style>
        :host { display: flex; flex-direction: column; width: 1920px; height: 1040px; overflow: hidden; position: relative; background: linear-gradient(90deg, #dfe3ea, #f0e1de); font-family: "Open Sans", "Liberation Sans", sans-serif; }
        .top { background: #217346; flex: none; }
      </style>
      <div class="top"><xl-titlebar></xl-titlebar><xl-tabstrip></xl-tabstrip></div>
      <xl-ribbon></xl-ribbon>
      <xl-formula-bar></xl-formula-bar>
      <xl-sheet></xl-sheet>
      <xl-sheet-tabs></xl-sheet-tabs>
      <xl-status-bar></xl-status-bar>
      <xl-watermark></xl-watermark>`;
  }
}

customElements.define('xl-icon', XlIcon);
customElements.define('xl-group', XlGroup);
customElements.define('xl-style-cell', XlStyleCell);
customElements.define('xl-combo', XlCombo);
customElements.define('xl-titlebar', XlTitlebar);
customElements.define('xl-tabstrip', XlTabstrip);
customElements.define('xl-ribbon', XlRibbon);
customElements.define('xl-formula-bar', XlFormulaBar);
customElements.define('xl-sheet', XlSheet);
customElements.define('xl-sheet-tabs', XlSheetTabs);
customElements.define('xl-status-bar', XlStatusBar);
customElements.define('xl-watermark', XlWatermark);
customElements.define('xl-app', XlApp);
</script>
</body>
</html>
